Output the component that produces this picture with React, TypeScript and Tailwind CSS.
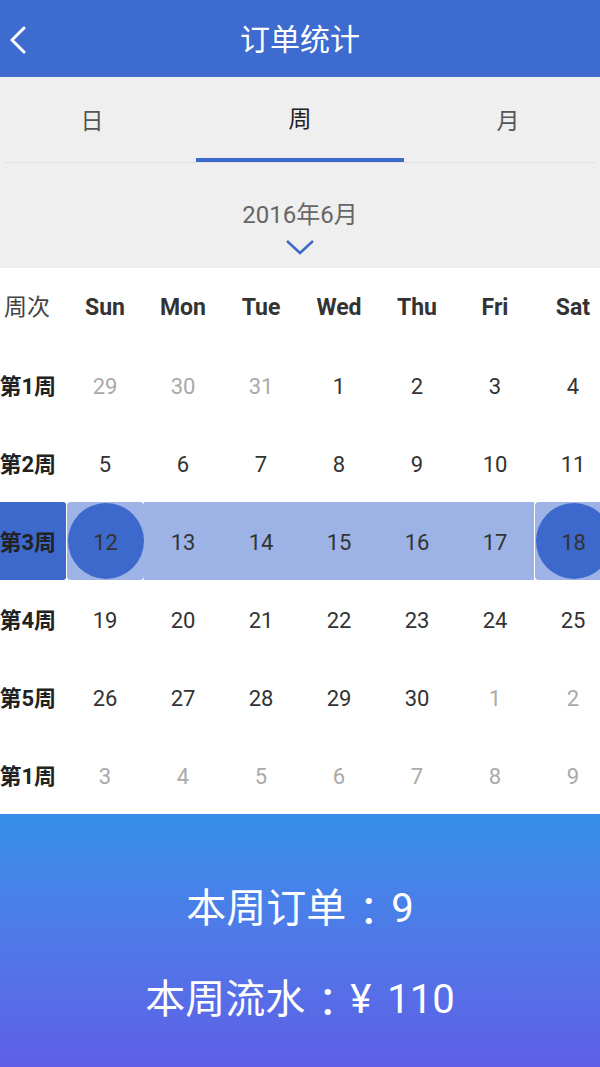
import React from "react";

const FONT = { fontFamily: 'Roboto, "Noto Sans CJK SC", sans-serif' };
const JP = { fontFamily: '"Noto Sans CJK JP", sans-serif' };

type Cell = { d: number; muted?: boolean };

const rows: { label: string; cells: Cell[]; selected?: boolean }[] = [
  { label: "第1周", cells: [{ d: 29, muted: true }, { d: 30, muted: true }, { d: 31, muted: true }, { d: 1 }, { d: 2 }, { d: 3 }, { d: 4 }] },
  { label: "第2周", cells: [5, 6, 7, 8, 9, 10, 11].map((d) => ({ d })) },
  { label: "第3周", cells: [12, 13, 14, 15, 16, 17, 18].map((d) => ({ d })), selected: true },
  { label: "第4周", cells: [19, 20, 21, 22, 23, 24, 25].map((d) => ({ d })) },
  { label: "第5周", cells: [{ d: 26 }, { d: 27 }, { d: 28 }, { d: 29 }, { d: 30 }, { d: 1, muted: true }, { d: 2, muted: true }] },
  { label: "第1周", cells: [3, 4, 5, 6, 7, 8, 9].map((d) => ({ d, muted: true })) },
];

const days = ["Sun", "Mon", "Tue", "Wed", "Thu", "Fri", "Sat"];

function SelectedRow({ label, cells }: { label: string; cells: Cell[] }) {
  return (
    <div className="flex h-[78px] items-center">
      <div className="flex h-[78px] w-[78px] items-center justify-end">
        <div className="flex h-[78px] w-[66px] items-center justify-end whitespace-nowrap rounded-r-[3px] bg-[#3d68cc] pr-[10px] pt-[3px] text-[22px] font-bold text-[#222]">
          <span className="shrink-0">{label}</span>
        </div>
      </div>
      <div className="flex h-[78px] w-[78px] items-center justify-center pl-[1px]">
        <div className="flex h-[78px] w-[77px] items-center justify-center rounded-[4px] bg-[#9db3e6]">
          <div className="flex h-[76px] w-[76px] items-center justify-center rounded-full bg-[#3d68cc] pt-[3px] text-[22px] text-[#333]">
            {cells[0].d}
          </div>
        </div>
      </div>
      <div className="flex h-[78px] w-[390px] bg-[#9db3e6]">
        {cells.slice(1, 6).map((c, i) => (
          <div key={i} className="flex w-[78px] items-center justify-center pt-[3px] text-[22px] text-[#333]">
            {c.d}
          </div>
        ))}
      </div>
      <div className="flex h-[78px] w-[78px] items-center justify-center pl-[1px]">
        <div className="flex h-[78px] w-[77px] items-center justify-center rounded-[4px] bg-[#9db3e6]">
          <div className="flex h-[76px] w-[76px] items-center justify-center rounded-full bg-[#3d68cc] pt-[3px] text-[22px] text-[#333]">
            {cells[6].d}
          </div>
        </div>
      </div>
    </div>
  );
}

export default function App() {
  return (
    <div className="flex h-[1067px] w-[600px] flex-col overflow-hidden bg-white" style={FONT}>
      <div className="relative flex h-[77px] items-center justify-center bg-[#3d6bcf]">
        <svg className="absolute left-[8px] top-[26px]" width="20" height="28" viewBox="0 0 20 28">
          <path d="M16 2 L4 14 L16 26" fill="none" stroke="white" strokeWidth="3" strokeLinecap="round" strokeLinejoin="round" />
        </svg>
        <span className="pt-[2px] text-[30px] text-white">订单统计</span>
      </div>
      <div className="flex flex-col overflow-hidden bg-[#efefef]">
        <div className="ml-[-12px] flex h-[85px] w-[624px]">
          <div className="flex w-[208px] flex-col">
            <div className="flex flex-1 items-center justify-center pt-[6px] text-[23px] text-[#555]">日</div>
          </div>
          <div className="flex w-[208px] flex-col">
            <div className="flex flex-1 items-center justify-center pt-[6px] text-[23px] text-[#222]">周</div>
            <div className="h-[4px] bg-[#3d68cc]" />
          </div>
          <div className="flex w-[208px] flex-col">
            <div className="flex flex-1 items-center justify-center pt-[6px] text-[23px] text-[#555]">月</div>
          </div>
        </div>
        <div className="mx-[4px] h-px bg-[#e2e2e2]" />
        <div className="flex h-[105px] flex-col items-center pt-[37px]">
          <span className="text-[24px] leading-[30px] text-[#666]">2016年6月</span>
          <svg className="mt-[8px]" width="30" height="18" viewBox="0 0 30 18">
            <path d="M2 3 L15 15 L28 3" fill="none" stroke="#3d68cc" strokeWidth="2.5" />
          </svg>
        </div>
      </div>
      <div className="h-[546px] overflow-hidden bg-white">
        <div className="ml-[-12px] w-[624px]">
          <div className="flex h-[78px] items-center">
            <div className="flex w-[78px] items-center justify-end whitespace-nowrap pr-[16px] pt-[3px] text-[23px] text-[#444]">周次</div>
            {days.map((d) => (
              <div key={d} className="flex w-[78px] items-center justify-center pt-[3px] text-[23px] font-bold text-[#333]">
                {d}
              </div>
            ))}
          </div>
          {rows.map((r, i) =>
            r.selected ? (
              <SelectedRow key={i} label={r.label} cells={r.cells} />
            ) : (
              <div key={i} className="flex h-[78px] items-center">
                <div className="flex w-[78px] items-center justify-end whitespace-nowrap pr-[10px] pt-[3px] text-[22px] font-bold text-[#222]">
                  {r.label}
                </div>
                {r.cells.map((c, j) => (
                  <div
                    key={j}
                    className={`flex w-[78px] items-center justify-center pt-[3px] text-[22px] ${c.muted ? "text-[#aaa]" : "text-[#333]"}`}
                  >
                    {c.d}
                  </div>
                ))}
              </div>
            )
          )}
        </div>
      </div>
      <div className="flex flex-1 flex-col items-center bg-gradient-to-b from-[#3590e9] to-[#5e5fe6] pt-[68px] text-white">
        <div className="flex items-center text-[40px] leading-[54px]">
          <span>本周订单</span>
          <span className="inline-block w-[45px] text-center" style={JP}>：</span>
          <span>9</span>
        </div>
        <div className="mt-[37px] flex items-center text-[40px] leading-[54px]">
          <span>本周流水</span>
          <span className="inline-block w-[45px] text-center" style={JP}>：</span>
          <span>¥</span>
          <span className="ml-[16px]">110</span>
        </div>
      </div>
    </div>
  );
}
